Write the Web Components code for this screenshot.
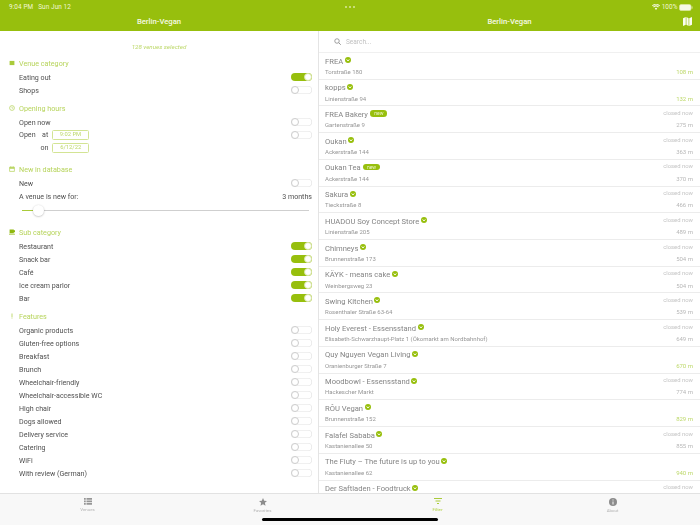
<!DOCTYPE html>
<html>
<head>
<meta charset="utf-8">
<style>
  html, body { margin: 0; padding: 0; height: 100%; overflow: hidden; background: #fff; }
  body { font-family: Roboto, "Liberation Sans", sans-serif; }
</style>
</head>
<body>
<bv-app>
  <bv-filter-pane slot="left">
    <bv-section title="Venue category" icon="square">
      <bv-switch-row on>Eating out</bv-switch-row>
      <bv-switch-row>Shops</bv-switch-row>
    </bv-section>
    <bv-section title="Opening hours" icon="clock" style="--top:5px">
      <bv-switch-row>Open now</bv-switch-row>
      <bv-switch-row><span>Open<span style="margin-left:6.5px">at</span><bv-chip>9:02 PM</bv-chip></span></bv-switch-row>
      <bv-switch-row noswitch><span style="margin-left:21.5px">on<bv-chip>6/12/22</bv-chip></span></bv-switch-row>
    </bv-section>
    <bv-section title="New in database" icon="calendar" style="--top:8px">
      <bv-switch-row>New</bv-switch-row>
      <bv-switch-row value="3 months">A venue is new for:</bv-switch-row>
      <bv-slider></bv-slider>
    </bv-section>
    <bv-section title="Sub category" icon="cup" style="--top:8px">
      <bv-switch-row on>Restaurant</bv-switch-row>
      <bv-switch-row on>Snack bar</bv-switch-row>
      <bv-switch-row on>Café</bv-switch-row>
      <bv-switch-row on>Ice cream parlor</bv-switch-row>
      <bv-switch-row on>Bar</bv-switch-row>
    </bv-section>
    <bv-section title="Features" icon="bang" style="--top:5px">
      <bv-switch-row>Organic products</bv-switch-row>
      <bv-switch-row>Gluten-free options</bv-switch-row>
      <bv-switch-row>Breakfast</bv-switch-row>
      <bv-switch-row>Brunch</bv-switch-row>
      <bv-switch-row>Wheelchair-friendly</bv-switch-row>
      <bv-switch-row>Wheelchair-accessible WC</bv-switch-row>
      <bv-switch-row>High chair</bv-switch-row>
      <bv-switch-row>Dogs allowed</bv-switch-row>
      <bv-switch-row>Delivery service</bv-switch-row>
      <bv-switch-row>Catering</bv-switch-row>
      <bv-switch-row>WiFi</bv-switch-row>
      <bv-switch-row>With review (German)</bv-switch-row>
    </bv-section>
  </bv-filter-pane>
  <bv-venue-list slot="right"></bv-venue-list>
</bv-app>

<script>
"use strict";

const GREEN = '#97bf0d';

function define(name, html, init) {
    customElements.define(name, class extends HTMLElement {
        constructor() {
            super();
            this.attachShadow({ mode: 'open' }).innerHTML = html;
        }
        connectedCallback() {
            if (init) init(this, this.shadowRoot);
        }
    });
}

define('bv-app', `
<style>
  /* reference is a downscaled iPad capture, so everything is a little soft */
  :host { display: grid; grid-template-columns: 318px 1px 381px; grid-template-rows: 31px 462px 32px; width: 700px; height: 525px; position: relative; filter: blur(.3px); }
  .nav { background: ${GREEN}; color: #fff; position: relative; }
  .status { height: 10px; padding-top: 2px; display: flex; align-items: center; font-size: 6.4px; letter-spacing: .1px; color: #f2f7d8; }
  .title { text-align: center; font-size: 7.7px; font-weight: 500; line-height: 20px; color: #f6f9e6; }
  .left { padding-left: 9px; gap: 5px; }
  .right { padding: 0 7px 0 26px; padding-top: 2px; }
  .dots { display: flex; gap: 2px; }
  .dots i { width: 2px; height: 2px; border-radius: 50%; background: #d8e89a; }
  .push { flex: 1; }
  .map { position: absolute; right: 8px; top: 17px; }
  .rule { grid-row: 1 / 3; grid-column: 2; background: linear-gradient(#e4e4e4, #e4e4e4) 0 31px no-repeat, ${GREEN}; }
  .pane { overflow: hidden; min-height: 0; }
  .tabs { grid-column: 1 / 4; display: grid; grid-template-columns: repeat(4, 175px); background: #f8f8f8; border-top: 1px solid #e2e2e2; box-sizing: border-box; }
  .home { position: absolute; left: 262px; top: 517.5px; width: 176px; height: 3px; border-radius: 2px; background: #000; }
  svg { display: block; }
</style>
<div class="nav" style="grid-column:1">
  <div class="status left"><span>9:04 PM</span><span>Sun Jun 12</span></div>
  <div class="title">Berlin-Vegan</div>
</div>
<div class="rule"></div>
<div class="nav" style="grid-column:3">
  <div class="status right">
    <div class="dots"><i></i><i></i><i></i></div>
    <div class="push"></div>
    <svg width="8" height="6" viewBox="0 0 16 12" style="margin-right:2px"><path d="M8 12 5.500 9a3.500 3.500 0 0 1 5 0zM3.800 7.200 2.200 5.400a8.400 8.400 0 0 1 11.600 0l-1.600 1.800a6 6 0 0 0-8.400 0zM1.200 4.300 0 3a11.500 11.500 0 0 1 16 0l-1.200 1.300a10 10 0 0 0-13.600 0z" fill="#f6f9e6"/></svg>
    <span>100%</span>
    <svg width="14" height="7" viewBox="0 0 14 7" style="margin-left:1.500px"><rect x=".5" y=".5" width="11.500" height="6" rx="1.500" fill="#f6f9e6" stroke="#dfeaa8" stroke-width=".6"/><rect x="12.500" y="2.300" width="1" height="2.400" rx=".5" fill="#dfeaa8"/></svg>
  </div>
  <div class="title">Berlin-Vegan</div>
  <svg class="map" width="9" height="9" viewBox="0 0 18 20" preserveAspectRatio="none"><path d="M0 3 5.500 0v17L0 20zM6.800 0l4.400 3v17l-4.400-3zM12.500 3 18 0v17l-5.500 3z" fill="#fbfdf0"/></svg>
</div>
<div class="pane" style="grid-column:1;grid-row:2"><slot name="left"></slot></div>
<div class="pane" style="grid-column:3;grid-row:2"><slot name="right"></slot></div>
<div class="tabs">
  <bv-tab label="Venues"><svg width="8" height="7" viewBox="0 0 16 14" fill="#969696"><path d="M0 0h3.500v3.500H0zM5 0h11v3.500H5zM0 5h3.500v3.500H0zM5 5h11v3.500H5zM0 10h3.500v3.500H0zM5 10h11v3.500H5z"/></svg></bv-tab>
  <bv-tab label="Favorites"><svg width="8" height="8" viewBox="0 0 16 16" fill="#8c8c8c"><path d="m8 0 2.400 5.300 5.600.6-4.200 3.800 1.200 5.700L8 12.500 3 15.400l1.200-5.700L0 5.900l5.600-.6z"/></svg></bv-tab>
  <bv-tab label="Filter" active><svg width="8" height="7" viewBox="0 0 16 14" fill="#a9cb3a"><path d="M0 0h16v2H0zM3 5h10v2H3zM6 10h4v2H6z"/></svg></bv-tab>
  <bv-tab label="About"><svg width="8" height="8" viewBox="0 0 16 16"><circle cx="8" cy="8" r="8" fill="#8c8c8c"/><path d="M7 3h2v2H7zM7 7h2v6H7z" fill="#f8f8f8"/></svg></bv-tab>
</div>
<div class="home"></div>
`);

define('bv-tab', `
<style>
  :host { display: flex; flex-direction: column; align-items: center; height: 20px; padding-top: 4px; font-size: 4.4px; color: #b4b4b4; }
  :host([active]) { color: #bcd75f; font-weight: 500; }
  .label { margin-top: 2px; line-height: 5px; }
</style>
<slot></slot><div class="label"></div>
`, (el, root) => { root.querySelector('.label').textContent = el.getAttribute('label'); });

define('bv-filter-pane', `
<style>
  :host { display: block; padding-top: 11px; }
  .count { text-align: center; font-size: 6.200px; font-style: italic; color: #bdd86a; line-height: 10px; margin-bottom: 4.500px; }
</style>
<div class="count">128 venues selected</div>
<slot></slot>
`);

const SECTION_ICONS = {
    square: '<rect x="1" y="1.500" width="8" height="7" fill="#a9cb3a"/>',
    clock: '<circle cx="5" cy="5" r="4" fill="none" stroke="#b5d35a" stroke-width="1.200"/><path d="M5 2.800v2.500h2" fill="none" stroke="#b5d35a" stroke-width="1"/>',
    calendar: '<path d="M1 2h8v7H1z" fill="none" stroke="#b5d35a" stroke-width="1.200"/><path d="M1 2h8v2.500H1zM2.500 .5h1.200v2H2.500zM6.300 .5h1.200v2H6.300z" fill="#b5d35a"/>',
    cup: '<path d="M1 1h7v1h2v3.500H8v1.500H1z" fill="#8fb80f"/><path d="M0 8h10v1.200H0z" fill="#8fb80f"/>',
    bang: '<path d="M4.300 1h1.400v5.500H4.300zM4.300 7.500h1.400V9H4.300z" fill="#b5d35a"/>'
};

define('bv-section', `
<style>
  :host { display: block; margin-top: var(--top, 0px); }
  .head { display: flex; align-items: center; height: 13px; padding-left: 9px; margin-bottom: 1px; font-size: 7.200px; color: #b7d45c; }
  svg { width: 6px; height: 6px; margin-right: 4px; flex: none; }
  .rows { padding-left: 19px; padding-right: 6px; }
</style>
<div class="head"><svg viewBox="0 0 10 10"></svg><span></span></div>
<div class="rows"><slot></slot></div>
`, (el, root) => {
    root.querySelector('svg').innerHTML = SECTION_ICONS[el.getAttribute('icon')];
    root.querySelector('span').textContent = el.getAttribute('title');
});

define('bv-switch-row', `
<style>
  :host { display: flex; align-items: center; justify-content: space-between; height: 13px; font-size: 7.100px; color: #505050; }
</style>
<slot></slot><div class="end"></div>
`, (el, root) => {
    const end = root.querySelector('.end');
    if (el.hasAttribute('value')) {
        end.textContent = el.getAttribute('value');
    } else if (!el.hasAttribute('noswitch')) {
        const s = document.createElement('bv-switch');
        if (el.hasAttribute('on')) s.setAttribute('on', '');
        end.appendChild(s);
    }
});

define('bv-switch', `
<style>
  :host { display: block; width: 21px; height: 8px; border-radius: 4px; background: #fff; box-shadow: inset 0 0 0 .6px #e2e2e2; position: relative; }
  :host([on]) { background: ${GREEN}; box-shadow: none; }
  i { position: absolute; left: 0; top: 0; width: 8px; height: 8px; box-sizing: border-box; border-radius: 50%; background: #fff; border: .6px solid #cdcdcd; }
  :host([on]) i { left: 13px; border-color: #d8e4a8; }
</style>
<i></i>
`);

define('bv-chip', `
<style>
  :host { display: inline-block; box-sizing: border-box; width: 36.500px; height: 9.500px; margin-left: 4px; border: 1px solid #d3e494; border-radius: 1.500px; font-size: 5.800px; line-height: 7.500px; text-align: center; color: #bdd86a; vertical-align: middle; }
</style>
<slot></slot>
`);

define('bv-slider', `
<style>
  :host { display: flex; align-items: center; height: 15px; padding: 0 3px 0 3px; }
  .min { width: 12px; height: 1px; background: #a9cb3a; }
  .knob { width: 11px; height: 11px; border-radius: 50%; background: #fff; box-shadow: 0 .5px 2px rgba(0,0,0,.3); flex: none; margin: 0 -1px; position: relative; }
  .max { flex: 1; height: 1px; background: #cfcfcf; }
</style>
<div class="min"></div><div class="knob"></div><div class="max"></div>
`);

define('bv-badge', `
<style>
  :host { display: inline-block; width: 6px; height: 6px; border-radius: 50%; background: ${GREEN}; position: relative; top: -1.500px; margin-left: 1.500px; vertical-align: middle; }
  svg { display: block; }
  :host([new]) { width: 17px; height: 6.500px; border-radius: 3.250px; margin-left: 2.400px; text-align: center; font-size: 5px; line-height: 6.500px; color: #eef5cf; }
</style>
<slot><svg width="6" height="6" viewBox="0 0 6 6"><path d="M1.700 2.400 3 4l1.300-1.600" fill="none" stroke="#fff" stroke-width=".9"/></svg></slot>
`);

define('bv-venue', `
<style>
  :host { display: block; box-sizing: border-box; height: 26.720px; padding: 2.500px 7px 0 6px; border-bottom: 1px solid #ececec; }
  .line { display: flex; justify-content: space-between; align-items: center; white-space: nowrap; }
  .one { height: 11px; line-height: 11px; }
  .two { height: 9px; line-height: 9px; margin-top: .3px; }
  .name { font-size: 7.600px; color: #858585; }
  .addr { font-size: 6px; color: #979797; }
  .closed { font-size: 5.900px; color: #c4c4c4; position: relative; top: -1px; }
  .dist { font-size: 6px; color: #b8b8b8; }
  :host([open]) .dist { color: #bdd86a; }
</style>
<div class="line one"><span class="name"></span><span class="closed"></span></div>
<div class="line two"><span class="addr"></span><span class="dist"></span></div>
`, (el, root) => {
    root.querySelector('.name').textContent = el.dataset.name;
    const badge = document.createElement('bv-badge');
    if (el.dataset.new) {
        badge.setAttribute('new', '');
        badge.textContent = 'new';
    }
    root.querySelector('.name').appendChild(badge);
    root.querySelector('.addr').textContent = el.dataset.addr;
    root.querySelector('.dist').textContent = el.dataset.dist;
    if (!el.hasAttribute('open')) root.querySelector('.closed').textContent = 'closed now';
});

const VENUES = [
    ['FREA', 'Torstraße 180', '108 m', 1],
    ['kopps', 'Linienstraße 94', '132 m', 1],
    ['FREA Bakery', 'Gartenstraße 9', '275 m', 0, 1],
    ['Oukan', 'Ackerstraße 144', '363 m', 0],
    ['Oukan Tea', 'Ackerstraße 144', '370 m', 0, 1],
    ['Sakura', 'Tieckstraße 8', '466 m', 0],
    ['HUADOU Soy Concept Store', 'Linienstraße 205', '489 m', 0],
    ['Chimneys', 'Brunnenstraße 173', '504 m', 0],
    ['KÄYK - means cake', 'Weinbergsweg 23', '504 m', 0],
    ['Swing Kitchen', 'Rosenthaler Straße 63-64', '539 m', 0],
    ['Holy Everest - Essensstand', 'Elisabeth-Schwarzhaupt-Platz 1 (Ökomarkt am Nordbahnhof)', '649 m', 0],
    ['Quy Nguyen Vegan Living', 'Oranienburger Straße 7', '670 m', 1],
    ['Moodbowl - Essensstand', 'Hackescher Markt', '774 m', 0],
    ['RÔU Vegan', 'Brunnenstraße 152', '829 m', 1],
    ['Falafel Sababa', 'Kastanienallee 50', '855 m', 0],
    ['The Fiuty – The future is up to you', 'Kastanienallee 62', '940 m', 1],
    ['Der Saftladen - Foodtruck', '', '', 0]
];

define('bv-venue-list', `
<style>
  :host { display: block; }
  .search { display: flex; align-items: center; height: 21px; padding-left: 15px; border-bottom: 1px solid #f0f0f0; font-size: 6.500px; color: #c0c0c0; }
  svg { margin-right: 5px; }
</style>
<div class="search">
  <svg width="7" height="7" viewBox="0 0 14 14"><circle cx="6" cy="6" r="4.500" fill="none" stroke="#888" stroke-width="1.600"/><path d="m9.500 9.500 4 4" stroke="#888" stroke-width="1.800"/></svg>
  Search...
</div>
<div class="items"></div>
`, (el, root) => {
    const items = root.querySelector('.items');
    for (const [name, addr, dist, open, isNew] of VENUES) {
        const v = document.createElement('bv-venue');
        v.dataset.name = name;
        v.dataset.addr = addr;
        v.dataset.dist = dist;
        if (open) v.setAttribute('open', '');
        if (isNew) v.dataset.new = '1';
        items.appendChild(v);
    }
});
</script>
</body>
</html>
